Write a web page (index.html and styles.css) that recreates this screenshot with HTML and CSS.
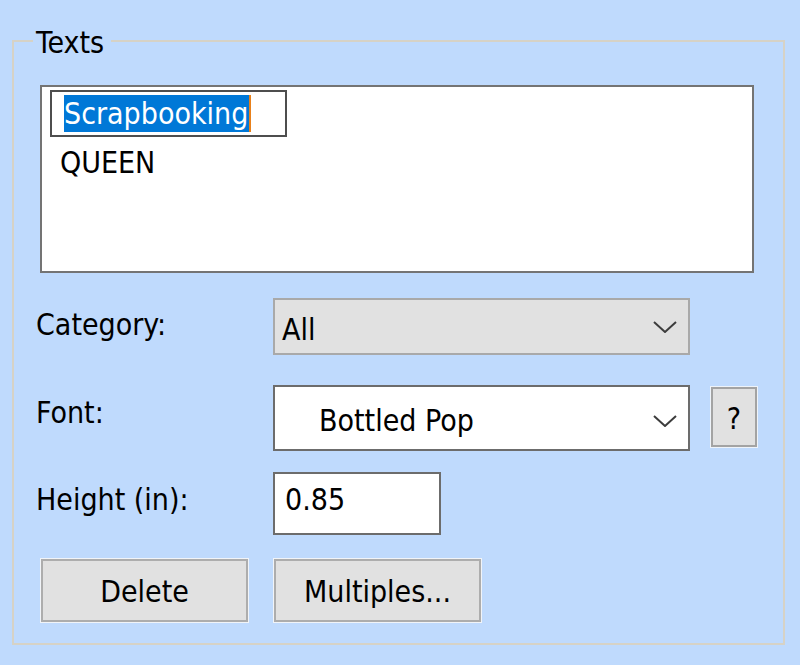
FILE: index.html
```html
<!DOCTYPE html>
<html lang="en">
<head>
<meta charset="utf-8">
<title>Texts</title>
<link rel="stylesheet" href="styles.css">
</head>
<body>
<fieldset class="group">
  <legend class="group-title">Texts</legend>
  <div class="listbox">
    <div class="edit-item"><span class="selection">Scrapbooking</span><span class="caret"></span></div>
    <div class="list-item">QUEEN</div>
  </div>
  <div class="row row-category">
    <div class="label">Category:</div>
    <div class="combo combo-gray">
      <span class="combo-text">All</span>
      <svg class="chevron" width="24" height="12" viewBox="0 0 24 12"><polyline points="1,1 12,11 23,1" fill="none" stroke="#3c3c3c" stroke-width="2"/></svg>
    </div>
  </div>
  <div class="row row-font">
    <div class="label">Font:</div>
    <div class="combo combo-white">
      <span class="combo-text font-name">Bottled Pop</span>
      <svg class="chevron" width="24" height="12" viewBox="0 0 24 12"><polyline points="1,1 12,11 23,1" fill="none" stroke="#3c3c3c" stroke-width="2"/></svg>
    </div>
    <div class="help-btn">?</div>
  </div>
  <div class="row row-height">
    <div class="label">Height (in):</div>
    <div class="textbox">0.85</div>
  </div>
  <div class="row row-buttons">
    <div class="button btn-delete">Delete</div>
    <div class="button btn-multiples">Multiples...</div>
  </div>
</fieldset>
</body>
</html>
```
FILE: styles.css
```css
* { box-sizing: border-box; }

html, body {
  margin: 0;
  padding: 0;
  width: 800px;
  height: 665px;
  background: #bfdafd;
  overflow: hidden;
}

body {
  font-family: "DejaVu Sans Condensed", "DejaVu Sans", sans-serif;
  font-stretch: condensed;
  font-size: 30px;
  line-height: 35px;
  color: #000;
  padding-top: 22px;
}

.group {
  margin: 0 15px 0 12px;
  padding: 25px 0 20px 22px;
  border: 2px solid #d6d2c6;
  min-width: 0;
}

.group-title {
  margin-left: -3px;
  padding: 3px 7px 0 3px;
  line-height: 35px;
}

.listbox {
  margin-left: 4px;
  width: 714px;
  height: 188px;
  background: #fff;
  border: 2px solid #747474;
  padding: 3px 8px;
}

.edit-item {
  width: 237px;
  height: 47px;
  border: 2px solid #4e4e4e;
  padding: 3px 0 0 12px;
  display: flex;
  align-items: flex-start;
}

.selection {
  background: #0078d7;
  color: #fff;
  line-height: 37px;
  height: 37px;
  padding-right: 1px;
}

.caret {
  width: 2px;
  height: 37px;
  background: #e8801a;
}

.list-item {
  padding: 8px 0 0 10px;
}

.row {
  display: flex;
  align-items: flex-start;
}

.label {
  width: 237px;
  padding-top: 10px;
  flex: none;
}

.row-category { margin-top: 25px; height: 57px; }
.row-category .label { padding-top: 9px; }
.row-font { margin-top: 30px; height: 66px; }
.row-height { margin-top: 21px; height: 63px; }
.row-buttons { margin-top: 23px; height: 65px; padding-left: 4px; gap: 24px; }

.combo {
  width: 417px;
  display: flex;
  align-items: center;
  border: 2px solid #a9a9a9;
}

.combo-gray {
  height: 57px;
  background: #e1e1e1;
  padding: 0 11px 0 7px;
}

.combo-gray .combo-text { padding-top: 5px; }

.combo-white {
  height: 66px;
  background: #fff;
  border-color: #6c6c6c;
  padding: 0 11px 0 44px;
}

.combo-white .combo-text { padding-top: 4px; }
.combo-white .chevron { margin-top: 5px; }

.combo-text { flex: 1; }

.chevron { flex: none; display: block; }

.help-btn {
  margin: 2px 0 0 21px;
  width: 46px;
  height: 60px;
  background: #e1e1e1;
  border: 2px solid #a3a3a3;
  box-shadow: 0 0 0 1px #eef3f9;
  display: flex;
  align-items: center;
  justify-content: center;
  font-size: 30px;
  padding-top: 3px;
}

.textbox {
  width: 168px;
  height: 63px;
  background: #fff;
  border: 2px solid #6c6c6c;
  padding: 8px 0 0 10px;
}

.button {
  margin: 1px;
  width: 207px;
  height: 63px;
  background: #e1e1e1;
  border: 2px solid #adadad;
  box-shadow: 0 0 0 1px #f1f4f8;
  text-align: center;
  padding-top: 13px;
}
```
